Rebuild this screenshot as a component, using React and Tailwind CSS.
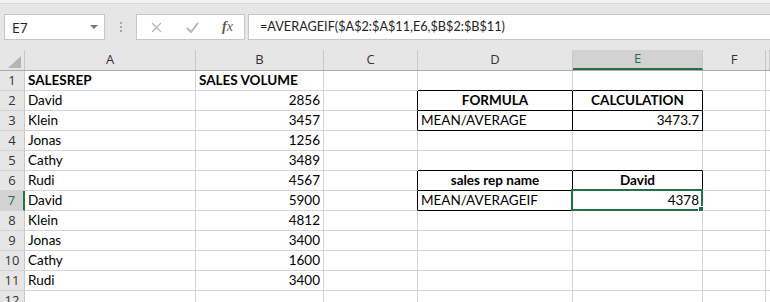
import React from "react";

const cols = [
  { key: "A", w: "w-[171px]" },
  { key: "B", w: "w-[128px]" },
  { key: "C", w: "w-[94px]" },
  { key: "D", w: "w-[155px]" },
  { key: "E", w: "w-[130px]" },
  { key: "F", w: "w-[63px]" },
  { key: "G", w: "flex-1" },
];

const people = [
  ["David", "2856"],
  ["Klein", "3457"],
  ["Jonas", "1256"],
  ["Cathy", "3489"],
  ["Rudi", "4567"],
  ["David", "5900"],
  ["Klein", "4812"],
  ["Jonas", "3400"],
  ["Cathy", "1600"],
  ["Rudi", "3400"],
];

// cell contents: { text, align, bold }
function cellAt(row, col) {
  if (row === 1 && col === "A") return { text: "SALESREP", bold: true };
  if (row === 1 && col === "B") return { text: "SALES VOLUME", bold: true };
  if (row >= 2 && row <= 11 && col === "A") return { text: people[row - 2][0] };
  if (row >= 2 && row <= 11 && col === "B") return { text: people[row - 2][1], align: "right" };
  if (row === 2 && col === "D") return { text: "FORMULA", bold: true, align: "center" };
  if (row === 2 && col === "E") return { text: "CALCULATION", bold: true, align: "center" };
  if (row === 3 && col === "D") return { text: "MEAN/AVERAGE" };
  if (row === 3 && col === "E") return { text: "3473.7", align: "right" };
  if (row === 6 && col === "D") return { text: "sales rep name", bold: true, align: "center" };
  if (row === 6 && col === "E") return { text: "David", bold: true, align: "center" };
  if (row === 7 && col === "D") return { text: "MEAN/AVERAGEIF" };
  if (row === 7 && col === "E") return { text: "4378", align: "right" };
  return null;
}

const boxed = (row, col) =>
  (col === "D" || col === "E") && [2, 3, 6, 7].includes(row);

function Cell({ row, col, w }) {
  const c = cellAt(row, col);
  const inBox = boxed(row, col);
  const rightBlack = inBox || (col === "C" && boxed(row, "D"));
  const bottomBlack = inBox || boxed(row + 1, col);
  const selected = row === 7 && col === "E";

  return (
    <div
      className={`relative h-[20px] shrink-0 border-r border-b ${w} ${
        rightBlack ? "border-r-black" : "border-r-[#d4d4d4]"
      } ${bottomBlack ? "border-b-black" : "border-b-[#d4d4d4]"} flex items-end px-[3px] pb-[1px] leading-none text-[13.5px] text-black whitespace-nowrap ${
        c?.align === "right" ? "justify-end" : c?.align === "center" ? "justify-center" : "justify-start"
      } ${c?.bold ? "font-bold" : "font-normal"}`}
    >
      {c && <span className="pb-[2px]">{c.text}</span>}
      {selected && (
        <div className="absolute -left-[2px] -top-[2px] -right-[1px] -bottom-[1px] z-10 border-2 border-[#217346]">
          <div className="absolute -right-[3px] -bottom-[3px] w-[6px] h-[6px] bg-[#217346] border border-white" />
        </div>
      )}
    </div>
  );
}

export default function App() {
  const rows = Array.from({ length: 12 }, (_, i) => i + 1);

  return (
    <div
      className="w-[770px] h-[302px] overflow-hidden bg-white"
      style={{ fontFamily: "Lato, 'Open Sans', sans-serif" }}
    >
      {/* ribbon edge */}
      <div className="h-[4px] bg-[#f3f2f1] border-b border-[#d8d8d8]" />

      {/* formula bar */}
      <div className="h-[46px] bg-[#e6e6e6] flex items-start pt-[10px] pl-[4px]">
        <div className="w-[101px] h-[26px] bg-white border border-[#c6c6c6] flex items-center justify-between pl-[7px] pr-[6px]">
          <span className="text-[14px] text-[#222]" style={{ fontFamily: "'Open Sans', sans-serif" }}>E7</span>
          <span className="w-0 h-0 border-l-[4px] border-r-[4px] border-t-[4px] border-l-transparent border-r-transparent border-t-[#777]" />
        </div>
        <div className="w-[31px] h-[26px] flex flex-col items-center justify-center gap-[2px]">
          <span className="w-[2px] h-[2px] bg-[#a8a8a8]" />
          <span className="w-[2px] h-[2px] bg-[#a8a8a8]" />
          <span className="w-[2px] h-[2px] bg-[#a8a8a8]" />
        </div>
        <div className="w-[109px] h-[26px] bg-white border border-[#c6c6c6] flex items-center">
          <svg className="ml-[14px]" width="11" height="11" viewBox="0 0 11 11">
            <path d="M1 1 L10 10 M10 1 L1 10" stroke="#b8b8b8" strokeWidth="1.4" fill="none" />
          </svg>
          <svg className="ml-[24px]" width="13" height="11" viewBox="0 0 13 11">
            <path d="M1 6 L5 10 L12 1" stroke="#b8b8b8" strokeWidth="2" fill="none" />
          </svg>
          <span
            className="ml-[23px] text-[14px] italic text-[#5b5b5b] leading-none"
            style={{ fontFamily: "'Liberation Serif', serif" }}
          >
            <span className="font-bold">f</span>x
          </span>
        </div>
        <div className="ml-[3px] flex-1 h-[26px] bg-white border border-r-0 border-[#c6c6c6] flex items-center pl-[11px]">
          <span className="text-[12.7px] text-[#222]" style={{ fontFamily: "Lato, sans-serif" }}>
            =AVERAGEIF($A$2:$A$11,E6,$B$2:$B$11)
          </span>
        </div>
      </div>

      {/* column headers */}
      <div className="flex h-[21px] bg-[#e6e6e6] border-b border-[#ababab]">
        <div className="w-[25px] shrink-0 border-r border-[#c8c8c8] flex items-end justify-end pr-[3px] pb-[2px]">
          <svg width="13" height="12" viewBox="0 0 13 12">
            <path d="M13 0 L13 12 L0 12 Z" fill="#b4b4b4" />
          </svg>
        </div>
        {cols.map((c) => (
          <div
            key={c.key}
            className={`${c.w} shrink-0 border-r border-[#c8c8c8] flex items-center justify-center text-[13px] ${
              c.key === "E"
                ? "bg-[#d2d2d2] text-[#217346] border-b-2 border-b-[#217346]"
                : "text-[#333]"
            }`}
            style={{ fontFamily: "'Open Sans', sans-serif" }}
          >
            {c.key === "G" ? "" : c.key}
          </div>
        ))}
      </div>

      {/* rows */}
      {rows.map((r) => (
        <div key={r} className="flex">
          <div
            className={`w-[25px] h-[20px] shrink-0 border-b border-[#d4d4d4] flex items-center justify-center text-[13px] ${
              r === 7
                ? "bg-[#d2d2d2] text-[#217346] border-r-2 border-r-[#217346]"
                : "bg-[#e6e6e6] text-[#333] border-r border-r-[#c8c8c8]"
            }`}
            style={{ fontFamily: "'Open Sans', sans-serif" }}
          >
            {r}
          </div>
          {cols.map((c) => (
            <Cell key={c.key} row={r} col={c.key} w={c.w} />
          ))}
        </div>
      ))}
    </div>
  );
}
